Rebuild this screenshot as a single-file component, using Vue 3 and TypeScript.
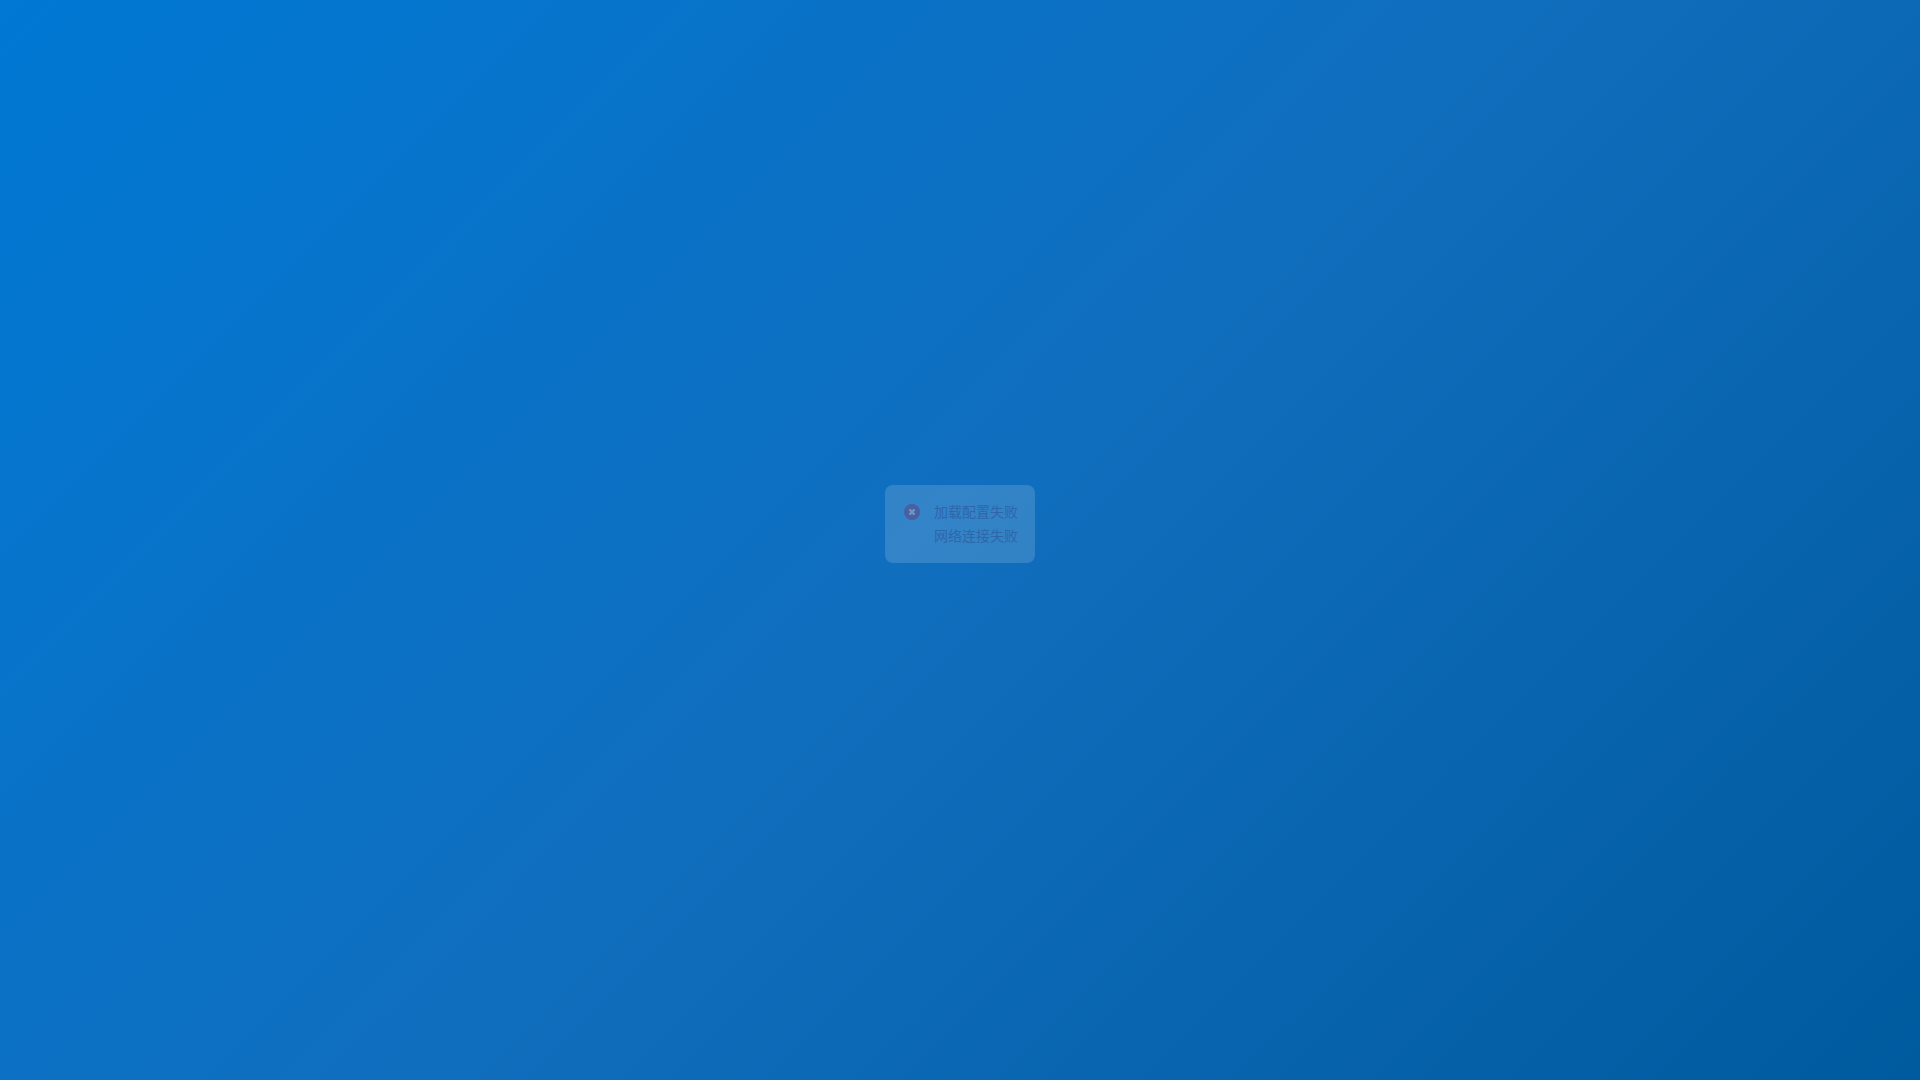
<template>
  <div class="page">
    <div class="toast">
      <svg class="toast-icon" viewBox="0 0 16 16" aria-hidden="true">
        <circle cx="8" cy="8" r="8" fill="#48609f" />
        <path d="M5.4 5.4l5.2 5.2M10.6 5.4l-5.2 5.2" stroke="#6f93cb" stroke-width="2.2" />
      </svg>
      <div class="toast-text">
        <div v-for="line in lines" :key="line">{{ line }}</div>
      </div>
    </div>
  </div>
</template>

<script setup lang="ts">
const lines: string[] = ['加载配置失败', '网络连接失败']
</script>

<style scoped>
.page {
  width: 100%;
  height: 100vh;
  padding-bottom: 32px;
  box-sizing: border-box;
  display: flex;
  align-items: center;
  justify-content: center;
  background: linear-gradient(135deg, #0078d4 0%, #106ebe 50%, #005a9e 100%);
  font-family: "Liberation Sans", "Noto Sans CJK SC", sans-serif;
}

.toast {
  width: 150px;
  height: 78px;
  box-sizing: border-box;
  padding: 15px 18px 15px 19px;
  display: flex;
  align-items: flex-start;
  gap: 14px;
  border-radius: 8px;
  background: rgba(255, 255, 255, 0.15);
}

.toast-icon {
  width: 16px;
  height: 16px;
  flex: none;
  margin-top: 4px;
}

.toast-text {
  font-size: 14px;
  line-height: 24px;
  color: #2f66aa;
  white-space: nowrap;
}
</style>

<style>
html,
body {
  margin: 0;
  overflow: hidden;
}
</style>
